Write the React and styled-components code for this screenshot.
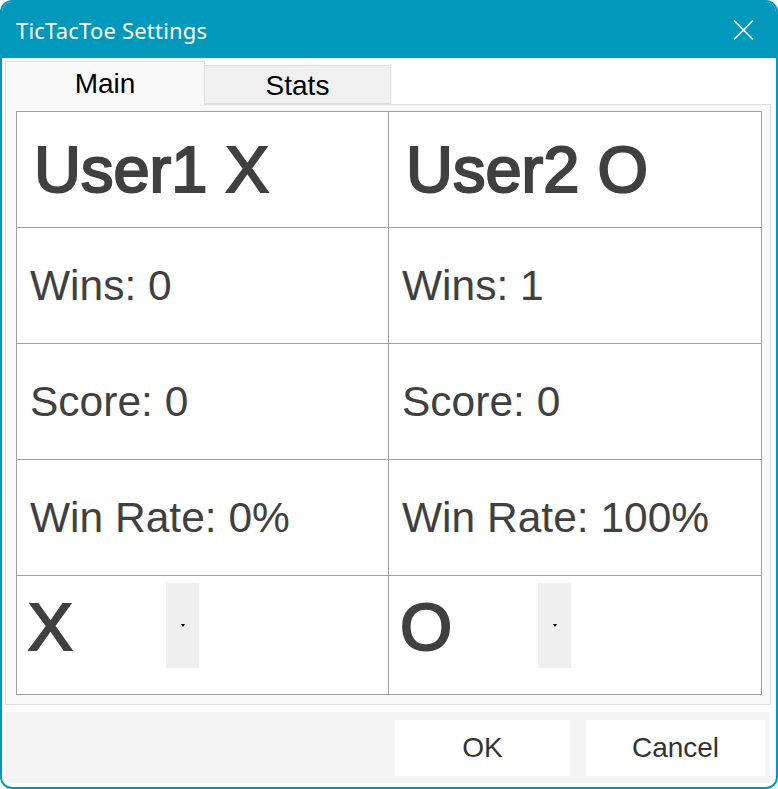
import React, { useState } from "react";
import styled, { createGlobalStyle } from "styled-components";

// ===== Global =====
const GlobalStyle = createGlobalStyle`
  html, body {
    margin: 0;
    padding: 0;
    background: #ffffff;
  }
  * { box-sizing: border-box; }
`;

// ===== Window frame =====
const Window = styled.div`
  width: 778px;
  height: 789px;
  border: 2px solid #0099bc;
  border-radius: 12px;
  overflow: hidden;
  background: #ffffff;
  display: flex;
  flex-direction: column;
  font-family: "Liberation Sans", Arial, sans-serif;
`;

const TitleBar = styled.div`
  flex: 0 0 58px;
  height: 58px;
  margin: -2px -2px 0;
  background: #0099bc;
  display: flex;
  align-items: center;
  justify-content: space-between;
  padding: 2px 24px 0 16px;
`;

const Title = styled.span`
  color: #ffffff;
  font-family: "Noto Sans", "Open Sans", sans-serif;
  font-size: 22px;
  letter-spacing: 0.2px;
`;

const CloseButton = styled.button`
  background: transparent;
  border: none;
  padding: 0;
  width: 22px;
  height: 22px;
  display: flex;
  align-items: center;
  justify-content: center;
  cursor: pointer;
`;

const Body = styled.div`
  flex: 1;
  display: flex;
  flex-direction: column;
  padding: 0 4px 3px 3px;
`;

// ===== Tabs =====
const TabStrip = styled.div`
  height: 46px;
  display: flex;
  align-items: flex-end;
  position: relative;
  z-index: 1;
`;

const Tab = styled.div`
  height: ${(p) => (p.active ? "44px" : "39px")};
  width: ${(p) => p.width}px;
  margin-bottom: ${(p) => (p.active ? "-1px" : "0")};
  background: ${(p) => (p.active ? "#f9f9f9" : "#f0f0f0")};
  border: 1px solid #dddddd;
  border-bottom: ${(p) => (p.active ? "none" : "1px solid #dddddd")};
  border-left: ${(p) => (p.first ? "1px solid #dddddd" : "none")};
  display: flex;
  align-items: center;
  justify-content: center;
  padding-top: ${(p) => (p.active ? "0" : "3px")};
  font-size: 28px;
  color: #000000;
  cursor: pointer;
`;

const Panel = styled.div`
  height: 601px;
  border: 1px solid #dddddd;
  background: #f8f8f8;
  padding: 6px 9px 10px 10px;
  margin-right: 1px;
`;

// ===== Stats table =====
const Table = styled.div`
  display: grid;
  grid-template-columns: 371px 372px;
  grid-template-rows: repeat(4, 115px) 118px;
  gap: 1px;
  padding: 1px;
  background: #a0a0a0;
  width: 746px;
`;

const Cell = styled.div`
  background: #ffffff;
  display: flex;
  align-items: center;
  padding-left: 13px;
  color: #404040;
  font-size: 42.5px;
  white-space: nowrap;
`;

const HeaderCell = styled(Cell)`
  padding-left: 17px;
  font-size: 65px;
  -webkit-text-stroke: 2.2px #404040;
`;

const PickerCell = styled(Cell)`
  align-items: flex-start;
  padding: 7px 0 0 10px;
`;

const Select = styled.div`
  width: 172px;
  height: 85px;
  display: flex;
  align-items: center;
`;

const SymbolText = styled.span`
  flex: 1;
  font-size: 67px;
  color: #404040;
  -webkit-text-stroke: 2.2px #404040;
  line-height: 1;
  padding: 1px 0 0 1px;
`;

const DropButton = styled.div`
  width: 33px;
  height: 85px;
  background: #efefef;
  display: flex;
  align-items: center;
  justify-content: center;
  cursor: pointer;

  &::after {
    content: "";
    width: 0;
    height: 0;
    border-left: 2.5px solid transparent;
    border-right: 2.5px solid transparent;
    border-top: 3px solid #000000;
  }
`;

// ===== Footer =====
const Gap = styled.div`
  height: 7px;
`;

const Footer = styled.div`
  height: 71px;
  background: #f4f4f4;
  display: flex;
  justify-content: flex-end;
  align-items: flex-start;
  gap: 16px;
  padding: 8px 5px 0 0;
  margin-right: 2px;
`;

const Button = styled.button`
  width: ${(p) => p.width}px;
  height: 56px;
  background: #ffffff;
  border: none;
  font-family: "Liberation Sans", Arial, sans-serif;
  font-size: 28px;
  color: #333333;
  cursor: pointer;
`;

const players = [
  { name: "User1 X", wins: 0, score: 0, rate: "0%", symbol: "X" },
  { name: "User2 O", wins: 1, score: 0, rate: "100%", symbol: "O" },
];

const App = () => {
  const [tab, setTab] = useState("main");

  return (
    <>
      <GlobalStyle />
      <Window>
        <TitleBar>
          <Title>TicTacToe Settings</Title>
          <CloseButton aria-label="Close">
            <svg width="21" height="20" viewBox="0 0 21 20">
              <path d="M1 0.5 L20 19.5 M20 0.5 L1 19.5" stroke="#ffffff" strokeWidth="1.5" fill="none" />
            </svg>
          </CloseButton>
        </TitleBar>
        <Body>
          <TabStrip>
            <Tab first active={tab === "main"} width={200} onClick={() => setTab("main")}>Main</Tab>
            <Tab active={tab === "stats"} width={186} onClick={() => setTab("stats")}>Stats</Tab>
          </TabStrip>
          <Panel>
            <Table>
              {players.map((p) => <HeaderCell key={p.name}>{p.name}</HeaderCell>)}
              {players.map((p) => <Cell key={p.name + "w"}>Wins: {p.wins}</Cell>)}
              {players.map((p) => <Cell key={p.name + "s"}>Score: {p.score}</Cell>)}
              {players.map((p) => <Cell key={p.name + "r"}>Win Rate: {p.rate}</Cell>)}
              {players.map((p) => (
                <PickerCell key={p.name + "sym"}>
                  <Select>
                    <SymbolText>{p.symbol}</SymbolText>
                    <DropButton />
                  </Select>
                </PickerCell>
              ))}
            </Table>
          </Panel>
          <Gap />
          <Footer>
            <Button width={175}>OK</Button>
            <Button width={179}>Cancel</Button>
          </Footer>
        </Body>
      </Window>
    </>
  );
};

export default App;
